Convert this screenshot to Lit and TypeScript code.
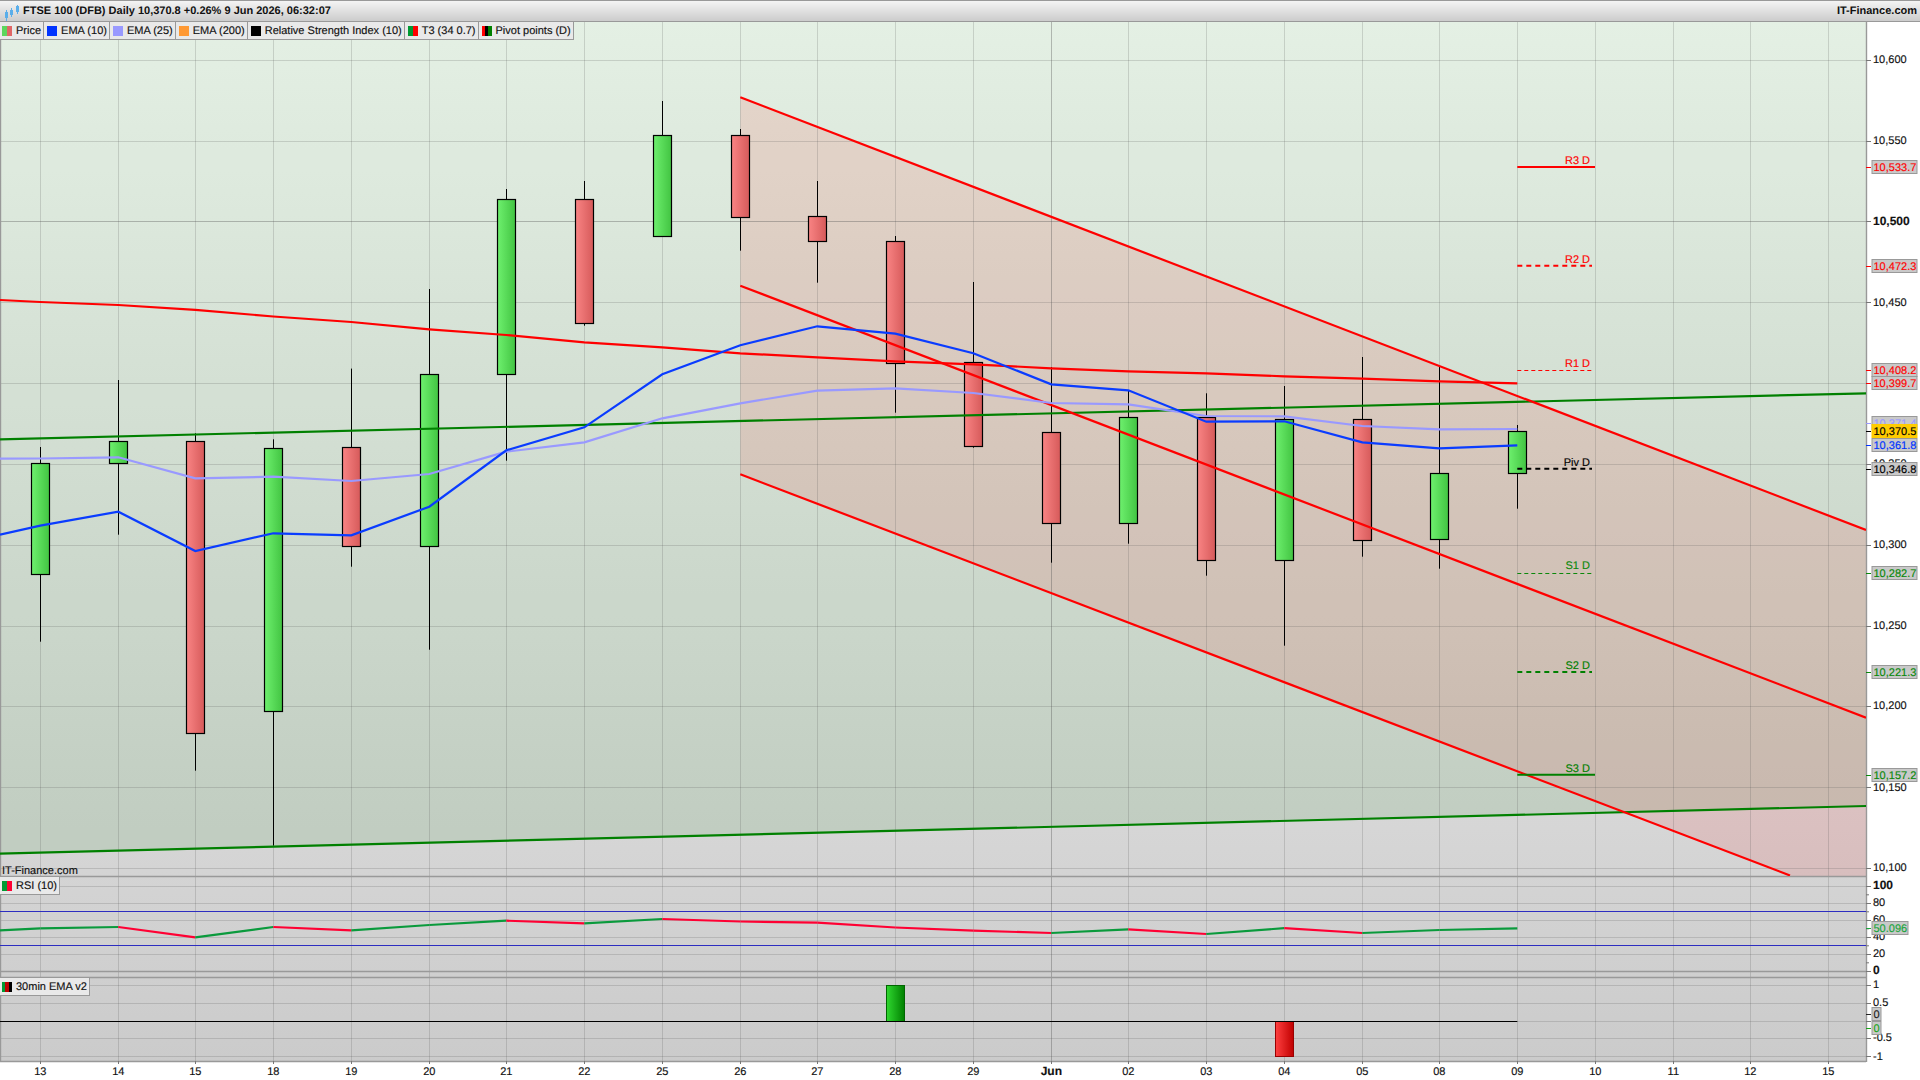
import { LitElement, html, css, svg } from 'lit';
import { customElement } from 'lit/decorators.js';

// pixel columns of the trading days
const xs = [
    40.3, 118.3, 195.3, 273.3, 351.3, 429.3, 506.3, 584.3, 662.3, 740.3, 817.3, 895.3, 973.3, 1051.3, 1128.3, 1206.3,
    1284.3, 1362.3, 1439.3, 1517.3,
];
const days = ['13', '14', '15', '18', '19', '20', '21', '22', '25', '26', '27', '28', '29', 'Jun', '02', '03', '04', '05', '08', '09', '10', '11', '12', '15'];
const dayXs = [...xs, 1595.3, 1673.3, 1750.3, 1828.3];

const CHART_RIGHT = 1866;
const PANE_BOTTOM = 1061;

// wick top, body top, body bottom, wick bottom, up?
const candles: [number, number, number, number, boolean][] = [
    [447, 463.3, 574.3, 641.7, true],
    [380, 441.3, 463.3, 534.7, true],
    [433.3, 441.3, 733.3, 770.7, false],
    [439.3, 448.3, 711.3, 845.7, true],
    [368.6, 447.3, 546.3, 566.7, false],
    [289, 374.3, 546.3, 649.7, true],
    [189, 199.3, 374.3, 460.7, true],
    [181, 199.3, 323.3, 325.7, false],
    [101, 135.3, 236.3, 236.3, true],
    [129, 135.3, 217.3, 250.7, false],
    [181, 216.3, 241.3, 282.7, false],
    [236, 241.3, 363.3, 412.7, false],
    [282, 362.3, 446.3, 447.7, false],
    [367, 432.3, 523.3, 562.7, false],
    [390, 417.3, 523.3, 543.7, true],
    [393.3, 417.3, 560.3, 575.7, false],
    [386, 419.3, 560.3, 645.7, true],
    [357, 419.3, 540.3, 556.7, false],
    [366.7, 473.3, 539.3, 568.7, true],
    [425, 431.3, 473.3, 508.7, true],
];

const ema10 = [525.7, 511.7, 551, 533.3, 535.3, 506.7, 450.3, 427.3, 374.3, 345.3, 326.3, 333.7, 353.3, 384.3, 390.3, 421.7, 421.3, 442.3, 448.3, 445.3];
const ema25 = [458.5, 457.3, 478.3, 476.7, 481, 474, 451.7, 442.3, 418.3, 403.3, 390.7, 388.3, 393, 403, 404.3, 416, 416.3, 426, 429.3, 429];
const t3 = [302, 305, 309.8, 316.5, 322, 329.4, 335, 342.3, 347.3, 353.3, 357.3, 361.3, 364.3, 368.3, 371.3, 373.3, 376.3, 378.7, 381.3, 383.3];
const rsi = [928.3, 927, 937.3, 927, 930.3, 925, 920.7, 923.3, 919, 921.5, 922.7, 927.5, 930.7, 933, 929.4, 934, 928.2, 933, 930, 928.3];

const legend = [
    { label: 'Price', swatch: ['#5cd65c', '#e06666'] },
    { label: 'EMA (10)', swatch: ['#0033ff'] },
    { label: 'EMA (25)', swatch: ['#9999ff'] },
    { label: 'EMA (200)', swatch: ['#ff9933'] },
    { label: 'Relative Strength Index (10)', swatch: ['#000000'] },
    { label: 'T3 (34 0.7)', swatch: ['#009933', '#ff0000'] },
    { label: 'Pivot points (D)', swatch: ['#ff0000', '#000000', '#008000'] },
];

const priceLabels = [
    { y: 60.3, t: '10,600' },
    { y: 141.3, t: '10,550' },
    { y: 221.5, t: '10,500', bold: true },
    { y: 302.7, t: '10,450' },
    { y: 383.5, t: '10,400' },
    { y: 464.3, t: '10,350' },
    { y: 545.3, t: '10,300' },
    { y: 626.3, t: '10,250' },
    { y: 706.3, t: '10,200' },
    { y: 787.5, t: '10,150' },
    { y: 868.3, t: '10,100' },
];

const rsiLabels = [
    { y: 886.3, t: '100', bold: true },
    { y: 903.3, t: '80' },
    { y: 920.3, t: '60' },
    { y: 937.3, t: '40' },
    { y: 954.3, t: '20' },
    { y: 971.3, t: '0', bold: true },
];

const emaLabels = [
    { y: 985.3, t: '1' },
    { y: 1003.3, t: '0.5' },
    { y: 1021.3, t: '' },
    { y: 1038.3, t: '-0.5' },
    { y: 1056.7, t: '-1' },
];

const tags = [
    { y: 167, t: '10,533.7', c: '#ff0000' },
    { y: 266.3, t: '10,472.3', c: '#ff0000' },
    { y: 370.3, t: '10,408.2', c: '#ff0000' },
    { y: 383, t: '10,399.7', c: '#ff0000' },
    { y: 423.5, t: '10,371.4', c: '#9999ff' },
    { y: 445.3, t: '10,361.8', c: '#0033ff' },
    { y: 431.3, t: '10,370.5', c: '#000000', bg: '#ffcc00' },
    { y: 469.3, t: '10,346.8', c: '#000000' },
    { y: 573.3, t: '10,282.7', c: '#0a880a' },
    { y: 672.3, t: '10,221.3', c: '#0a880a' },
    { y: 775, t: '10,157.2', c: '#0a880a' },
    { y: 928.3, t: '50.096', c: '#1aa53c', w: 36 },
    { y: 1014.3, t: '0', c: '#222222', w: 9 },
    { y: 1028.3, t: '0', c: '#1aa51a', w: 9 },
];

const pivots = [
    { y: 167, t: 'R3 D', c: '#ff0000', w: 2, end: 1595, up: 3 },
    { y: 265.7, t: 'R2 D', c: '#ff0000', w: 2, dash: '5 4', end: 1592, up: 3 },
    { y: 370.5, t: 'R1 D', c: '#ff0000', w: 1, dash: '4 3', end: 1593, up: 4 },
    { y: 468.7, t: 'Piv D', c: '#000000', w: 2, dash: '5 4', end: 1592, up: 3 },
    { y: 573.5, t: 'S1 D', c: '#0a880a', w: 1, dash: '4 3', end: 1593, up: 4.5 },
    { y: 672, t: 'S2 D', c: '#008000', w: 2, dash: '5 4', end: 1592, up: 3.5 },
    { y: 774.7, t: 'S3 D', c: '#008000', w: 2, end: 1595, up: 3 },
];

const snap = (v: number) => Math.floor(v) + 0.5;
const points = (first: number, ys: number[]) =>
    [`0,${first}`, ...ys.map((y, i) => `${xs[i]},${y}`)].join(' ');

@customElement('app-root')
export class AppRoot extends LitElement {
    static styles = css`
        :host {
            display: block;
            width: 1920px;
            height: 1080px;
            background: #ffffff;
            overflow: hidden;
            font-family: 'Liberation Sans', Arial, sans-serif;
            color: #111111;
            text-rendering: geometricPrecision;
        }

        .head {
            display: flex;
            justify-content: space-between;
            align-items: center;
            box-sizing: border-box;
            height: 22px;
            padding: 0 3px 0 23px;
            border-top: 1px solid #999999;
            border-bottom: 1px solid #999999;
            background: linear-gradient(#f4f4f4, #cccccc);
            font-size: 11px;
            font-weight: bold;
            position: relative;
        }

        .logo {
            position: absolute;
            left: 4px;
            top: 3px;
        }

        .chart {
            position: relative;
        }

        .chart > svg {
            display: block;
        }

        .legend {
            position: absolute;
            left: 0;
            display: flex;
            font-size: 11px;
            background: #e9e9e9;
            border-right: 1px solid #999999;
            border-bottom: 1px solid #999999;
            -webkit-text-stroke: 0.15px #111111;
        }

        .legend.top {
            top: 0;
        }

        .legend.rsi {
            top: 855px;
        }

        .legend.ema {
            top: 956px;
        }

        .item {
            display: flex;
            align-items: center;
            gap: 4px;
            height: 17px;
            padding: 0 2px 0 2px;
            line-height: 17px;
            white-space: nowrap;
        }

        .item span:last-child {
            padding-top: 1px;
        }

        .item + .item {
            border-left: 1px solid #999999;
            padding-left: 3px;
        }

        .swatch {
            display: flex;
            width: 10px;
            height: 10px;
        }

        .swatch i {
            flex: 1;
        }

        text {
            font-family: 'Liberation Sans', Arial, sans-serif;
            font-size: 11px;
            fill: #111111;
            stroke: #111111;
            stroke-width: 0.15;
        }

        text.bold {
            font-size: 12px;
            font-weight: bold;
        }

        text.mid {
            text-anchor: middle;
        }

        text.end {
            text-anchor: end;
        }

        .grid {
            stroke: rgba(80, 80, 80, 0.2);
            stroke-width: 1;
        }

        .grid.strong {
            stroke: rgba(80, 80, 80, 0.36);
        }

        .rule {
            stroke: #999999;
            stroke-width: 1.4;
        }

        .wick {
            stroke: #000000;
            stroke-width: 1;
        }

        .body {
            stroke: #000000;
            stroke-width: 1.2;
        }

        .thick {
            fill: none;
            stroke-width: 2.2;
        }

        .tick {
            stroke: #777777;
            stroke-width: 1;
        }
    `;

    private renderSwatch(colors: string[]) {
        return html`<span class="swatch">${colors.map((c) => html`<i style="background:${c}"></i>`)}</span>`;
    }

    private renderGrid() {
        const hLines = [...priceLabels, ...rsiLabels, ...emaLabels];
        return svg`
            ${hLines.map(
                (l) => svg`<line class="grid ${l.y === 221.5 ? 'strong' : ''}" x1="0" x2=${CHART_RIGHT} y1=${snap(l.y)} y2=${snap(l.y)}></line>`
            )}
            ${dayXs.map(
                (x, i) => svg`<line class="grid ${days[i] === 'Jun' ? 'strong' : ''}" x1=${snap(x)} x2=${snap(x)} y1="22" y2=${PANE_BOTTOM}></line>`
            )}
        `;
    }

    private renderCandles() {
        return candles.map(([wt, bt, bb, wb, up], i) => {
            const x = snap(xs[i]);
            return svg`
                <line class="wick" x1=${x} x2=${x} y1=${wt} y2=${wb}></line>
                <rect class="body" fill=${up ? 'url(#up)' : 'url(#down)'} x=${x - 9} y=${snap(bt)} width="18" height=${Math.round(bb - bt)}></rect>
            `;
        });
    }

    private renderRsi() {
        const all = [930.3, ...rsi];
        const allX = [0, ...xs];
        return all.slice(1).map((y, i) => {
            const rising = y <= all[i];
            return svg`<line class="thick" stroke=${rising ? '#0a9a3c' : '#ff0033'} x1=${allX[i]} x2=${allX[i + 1]} y1=${all[i]} y2=${y}></line>`;
        });
    }

    private renderAxis() {
        const labels = [...priceLabels, ...rsiLabels, ...emaLabels];
        const minor = [894.8, 911.8, 928.8, 945.8, 962.8];
        return svg`
            ${labels.map(
                (l) => svg`
                    <line class="tick" x1=${CHART_RIGHT} x2=${CHART_RIGHT + 5} y1=${snap(l.y)} y2=${snap(l.y)}></line>
                    <text class=${l.bold ? 'bold' : ''} x="1873" y=${l.y + 3}>${l.t}</text>
                `
            )}
            ${minor.map((y) => svg`<line class="tick" x1=${CHART_RIGHT} x2=${CHART_RIGHT + 3} y1=${y} y2=${y}></line>`)}
            ${dayXs.map(
                (x, i) => svg`
                    <line class="tick" x1=${snap(x)} x2=${snap(x)} y1=${PANE_BOTTOM} y2=${PANE_BOTTOM + 3}></line>
                    <text class="mid ${days[i] === 'Jun' ? 'bold' : ''}" x=${x} y="1075">${days[i]}</text>
                `
            )}
            ${tags.map((t) => {
                const w = t.w ?? 45;
                return svg`
                    <line stroke=${t.c} x1=${CHART_RIGHT} x2=${CHART_RIGHT + 5} y1=${snap(t.y)} y2=${snap(t.y)}></line>
                    <rect fill=${t.bg ?? '#c9c9c9'} stroke=${t.bg ?? '#999999'} x="1872" y=${snap(t.y - 7)} width=${w} height="13"></rect>
                    <text style="fill:${t.c};stroke:${t.c}" x="1873.5" y=${t.y + 3.5}>${t.t}</text>
                `;
            })}
        `;
    }

    private renderPivots() {
        return pivots.map(
            (p) => svg`
                <line stroke=${p.c} stroke-width=${p.w} stroke-dasharray=${p.dash ?? 'none'} x1=${xs[19]} x2=${p.end} y1=${p.y} y2=${p.y}></line>
                <text class="end" style="fill:${p.c};stroke:${p.c}" x="1590" y=${p.y - p.up}>${p.t}</text>
            `
        );
    }

    render() {
        return html`
            <div class="head">
                <svg class="logo" width="16" height="17" viewBox="0 0 16 17">
                    <g fill="#5aaeea" stroke="#5aaeea">
                        <line x1="2.5" x2="2.5" y1="6" y2="17"></line>
                        <rect x="1" y="8" width="3" height="6" stroke="none"></rect>
                        <line x1="7.5" x2="7.5" y1="4" y2="13"></line>
                        <rect x="6" y="6" width="3" height="5" stroke="none"></rect>
                        <line x1="13.5" x2="13.5" y1="1" y2="10"></line>
                        <rect x="12" y="2" width="3" height="6" stroke="none"></rect>
                    </g>
                </svg>
                <span>FTSE 100 (DFB) Daily 10,370.8 +0.26% 9 Jun 2026, 06:32:07</span>
                <span>IT-Finance.com</span>
            </div>
            <div class="chart">
                <svg width="1920" height="1058" viewBox="0 22 1920 1058">
                    <defs>
                        <linearGradient id="paper" x1="0" y1="0" x2="0" y2="1">
                            <stop offset="0" stop-color="#fcfcfc"></stop>
                            <stop offset="1" stop-color="#cbcbcb"></stop>
                        </linearGradient>
                        <linearGradient id="up">
                            <stop offset="0" stop-color="#6ef06e"></stop>
                            <stop offset="1" stop-color="#42c442"></stop>
                        </linearGradient>
                        <linearGradient id="down">
                            <stop offset="0" stop-color="#f98484"></stop>
                            <stop offset="1" stop-color="#d65a5a"></stop>
                        </linearGradient>
                        <linearGradient id="barUp">
                            <stop offset="0" stop-color="#30d830"></stop>
                            <stop offset="1" stop-color="#008000"></stop>
                        </linearGradient>
                        <linearGradient id="barDown">
                            <stop offset="0" stop-color="#ff4040"></stop>
                            <stop offset="1" stop-color="#c00000"></stop>
                        </linearGradient>
                        <clipPath id="mainPane">
                            <rect x="0" y="22" width=${CHART_RIGHT} height="854"></rect>
                        </clipPath>
                    </defs>

                    <rect x="0" y="22" width=${CHART_RIGHT} height=${PANE_BOTTOM - 22} fill="url(#paper)"></rect>
                    <polygon points="0,22 1866,22 1866,806 0,853.7" fill="rgba(0,128,0,0.095)"></polygon>
                    <polygon points="740.3,97.3 1866,530 1866,876 1790,876 740.3,474.3" fill="rgba(255,0,0,0.1)"></polygon>

                    ${this.renderGrid()}

                    <line class="rule" x1="0" x2=${CHART_RIGHT} y1="876.5" y2="876.5"></line>
                    <line class="rule" x1="0" x2=${CHART_RIGHT} y1="971.5" y2="971.5"></line>
                    <line class="rule" x1="0" x2=${CHART_RIGHT} y1="977.5" y2="977.5"></line>
                    <line class="rule" x1="0" x2=${CHART_RIGHT} y1="1061.5" y2="1061.5"></line>
                    <line class="rule" x1="0.5" x2="0.5" y1="22" y2="1061"></line>
                    <line class="rule" x1=${CHART_RIGHT + 0.5} x2=${CHART_RIGHT + 0.5} y1="22" y2="1062"></line>

                    ${this.renderCandles()}

                    <g clip-path="url(#mainPane)">
                        <line class="thick" stroke="#008000" x1="0" x2=${CHART_RIGHT} y1="439.3" y2="393.3"></line>
                        <line class="thick" stroke="#008000" x1="0" x2=${CHART_RIGHT} y1="853.7" y2="806"></line>
                        <line class="thick" stroke="#ff0000" x1="740.3" x2=${CHART_RIGHT} y1="97.3" y2="530"></line>
                        <line class="thick" stroke="#ff0000" x1="740.3" x2=${CHART_RIGHT} y1="285.7" y2="717.7"></line>
                        <line class="thick" stroke="#ff0000" x1="740.3" x2="1790" y1="474.3" y2="875.5"></line>
                        <polyline class="thick" stroke="#ff0000" points=${points(300, t3)}></polyline>
                        <polyline class="thick" stroke="#9999ff" points=${points(458.7, ema25)}></polyline>
                        <polyline class="thick" stroke="#0a3cff" points=${points(534.7, ema10)}></polyline>
                    </g>

                    ${this.renderPivots()}

                    <text x="2" y="874">IT-Finance.com</text>

                    <line stroke="#2d2dc0" x1="0" x2=${CHART_RIGHT} y1="911.5" y2="911.5"></line>
                    <line stroke="#2d2dc0" x1="0" x2=${CHART_RIGHT} y1="945.5" y2="945.5"></line>
                    ${this.renderRsi()}

                    <rect x=${snap(xs[11]) - 9} y="985.5" width="18" height="36" fill="url(#barUp)" stroke="#006600"></rect>
                    <rect x=${snap(xs[16]) - 9} y="1021.5" width="18" height="35" fill="url(#barDown)" stroke="#990000"></rect>
                    <line stroke="#000000" x1="0" x2=${xs[19]} y1="1021.5" y2="1021.5"></line>

                    ${this.renderAxis()}
                </svg>

                <div class="legend top">
                    ${legend.map((l) => html`<div class="item">${this.renderSwatch(l.swatch)}<span>${l.label}</span></div>`)}
                </div>
                <div class="legend rsi">
                    <div class="item">${this.renderSwatch(['#009933', '#ff0033'])}<span>RSI (10)</span></div>
                </div>
                <div class="legend ema">
                    <div class="item">${this.renderSwatch(['#009933', '#bb0000', '#000000'])}<span>30min EMA v2</span></div>
                </div>
            </div>
        `;
    }
}

declare global {
    interface HTMLElementTagNameMap {
        'app-root': AppRoot;
    }
}
